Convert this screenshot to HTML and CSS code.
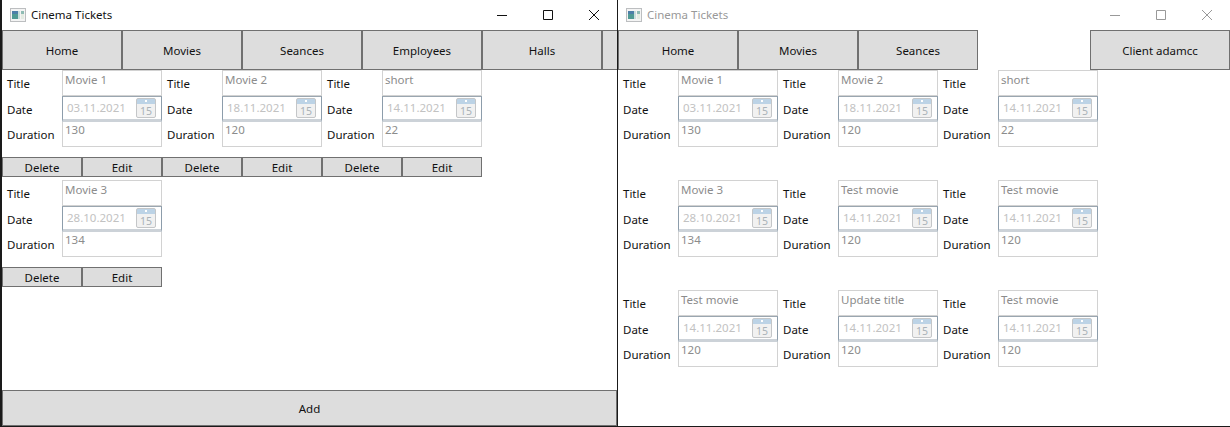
FILE: index.html
```html
<!DOCTYPE html>
<html lang="en">
<head>
    <meta charset="utf-8">
    <title>Cinema Tickets</title>
    <link rel="stylesheet" href="styles.css">
</head>
<body>
    <!-- admin window -->
    <div class="window admin">
        <div class="titlebar">
            <svg class="app-icon" viewBox="0 0 16 14">
                <rect x="0.5" y="0.5" width="15" height="13" fill="#f4f4f4" stroke="#bcbec0"/>
                <rect x="2" y="3" width="6" height="8" fill="#4f9a94"/>
                <rect x="2" y="3" width="6" height="3" fill="#4c7fa8"/>
                <rect x="8" y="3" width="2" height="8" fill="#c9dedb"/>
                <rect x="11" y="3" width="3" height="3" fill="#8fbcb4"/>
                <rect x="11" y="6" width="3" height="5" fill="#e4ebe2"/>
            </svg>
            <span class="title">Cinema Tickets</span>
            <div class="controls">
                <svg viewBox="0 0 10 10"><path d="M0 5.5H10"/></svg>
                <svg viewBox="0 0 10 10"><path d="M.5.5H9.5V9.5H.5Z"/></svg>
                <svg viewBox="0 0 10 10"><path d="M0 0L10 10M10 0L0 10"/></svg>
            </div>
        </div>
        <div class="nav">
            <button class="btn nav-btn">Home</button>
            <button class="btn nav-btn">Movies</button>
            <button class="btn nav-btn">Seances</button>
            <button class="btn nav-btn">Employees</button>
            <button class="btn nav-btn">Halls</button>
            <button class="btn nav-rest"></button>
        </div>
        <div class="movies">
            <div class="movie">
                <div class="labels"><span>Title</span><span>Date</span><span>Duration</span></div>
                <div class="fields">
                    <div class="field">Movie 1</div>
                    <div class="datefield"><span>03.11.2021</span><span class="cal">15</span></div>
                    <div class="field num">130</div>
                </div>
                <div class="actions"><button class="btn">Delete</button><button class="btn">Edit</button></div>
            </div>
            <div class="movie">
                <div class="labels"><span>Title</span><span>Date</span><span>Duration</span></div>
                <div class="fields">
                    <div class="field">Movie 2</div>
                    <div class="datefield"><span>18.11.2021</span><span class="cal">15</span></div>
                    <div class="field num">120</div>
                </div>
                <div class="actions"><button class="btn">Delete</button><button class="btn">Edit</button></div>
            </div>
            <div class="movie">
                <div class="labels"><span>Title</span><span>Date</span><span>Duration</span></div>
                <div class="fields">
                    <div class="field">short</div>
                    <div class="datefield"><span>14.11.2021</span><span class="cal">15</span></div>
                    <div class="field num">22</div>
                </div>
                <div class="actions"><button class="btn">Delete</button><button class="btn">Edit</button></div>
            </div>
            <div class="movie">
                <div class="labels"><span>Title</span><span>Date</span><span>Duration</span></div>
                <div class="fields">
                    <div class="field">Movie 3</div>
                    <div class="datefield"><span>28.10.2021</span><span class="cal">15</span></div>
                    <div class="field num">134</div>
                </div>
                <div class="actions"><button class="btn">Delete</button><button class="btn">Edit</button></div>
            </div>
        </div>
        <button class="btn add">Add</button>
    </div>

    <!-- client window -->
    <div class="window client">
        <div class="titlebar inactive">
            <svg class="app-icon" viewBox="0 0 16 14">
                <rect x="0.5" y="0.5" width="15" height="13" fill="#f4f4f4" stroke="#bcbec0"/>
                <rect x="2" y="3" width="6" height="8" fill="#4f9a94"/>
                <rect x="2" y="3" width="6" height="3" fill="#4c7fa8"/>
                <rect x="8" y="3" width="2" height="8" fill="#c9dedb"/>
                <rect x="11" y="3" width="3" height="3" fill="#8fbcb4"/>
                <rect x="11" y="6" width="3" height="5" fill="#e4ebe2"/>
            </svg>
            <span class="title">Cinema Tickets</span>
            <div class="controls">
                <svg viewBox="0 0 10 10"><path d="M0 5.5H10"/></svg>
                <svg viewBox="0 0 10 10"><path d="M.5.5H9.5V9.5H.5Z"/></svg>
                <svg viewBox="0 0 10 10"><path d="M0 0L10 10M10 0L0 10"/></svg>
            </div>
        </div>
        <div class="nav">
            <button class="btn nav-btn">Home</button>
            <button class="btn nav-btn">Movies</button>
            <button class="btn nav-btn">Seances</button>
            <button class="btn nav-user">Client adamcc</button>
        </div>
        <div class="movies">
            <div class="movie">
                <div class="labels"><span>Title</span><span>Date</span><span>Duration</span></div>
                <div class="fields">
                    <div class="field">Movie 1</div>
                    <div class="datefield"><span>03.11.2021</span><span class="cal">15</span></div>
                    <div class="field num">130</div>
                </div>
            </div>
            <div class="movie">
                <div class="labels"><span>Title</span><span>Date</span><span>Duration</span></div>
                <div class="fields">
                    <div class="field">Movie 2</div>
                    <div class="datefield"><span>18.11.2021</span><span class="cal">15</span></div>
                    <div class="field num">120</div>
                </div>
            </div>
            <div class="movie">
                <div class="labels"><span>Title</span><span>Date</span><span>Duration</span></div>
                <div class="fields">
                    <div class="field">short</div>
                    <div class="datefield"><span>14.11.2021</span><span class="cal">15</span></div>
                    <div class="field num">22</div>
                </div>
            </div>
            <div class="movie">
                <div class="labels"><span>Title</span><span>Date</span><span>Duration</span></div>
                <div class="fields">
                    <div class="field">Movie 3</div>
                    <div class="datefield"><span>28.10.2021</span><span class="cal">15</span></div>
                    <div class="field num">134</div>
                </div>
            </div>
            <div class="movie">
                <div class="labels"><span>Title</span><span>Date</span><span>Duration</span></div>
                <div class="fields">
                    <div class="field">Test movie</div>
                    <div class="datefield"><span>14.11.2021</span><span class="cal">15</span></div>
                    <div class="field num">120</div>
                </div>
            </div>
            <div class="movie">
                <div class="labels"><span>Title</span><span>Date</span><span>Duration</span></div>
                <div class="fields">
                    <div class="field">Test movie</div>
                    <div class="datefield"><span>14.11.2021</span><span class="cal">15</span></div>
                    <div class="field num">120</div>
                </div>
            </div>
            <div class="movie">
                <div class="labels"><span>Title</span><span>Date</span><span>Duration</span></div>
                <div class="fields">
                    <div class="field">Test movie</div>
                    <div class="datefield"><span>14.11.2021</span><span class="cal">15</span></div>
                    <div class="field num">120</div>
                </div>
            </div>
            <div class="movie">
                <div class="labels"><span>Title</span><span>Date</span><span>Duration</span></div>
                <div class="fields">
                    <div class="field">Update title</div>
                    <div class="datefield"><span>14.11.2021</span><span class="cal">15</span></div>
                    <div class="field num">120</div>
                </div>
            </div>
            <div class="movie">
                <div class="labels"><span>Title</span><span>Date</span><span>Duration</span></div>
                <div class="fields">
                    <div class="field">Test movie</div>
                    <div class="datefield"><span>14.11.2021</span><span class="cal">15</span></div>
                    <div class="field num">120</div>
                </div>
            </div>
        </div>
    </div>
</body>
</html>
```

FILE: styles.css
```css
html, body {
    margin: 0;
    height: 100%;
    overflow: hidden;
}

body {
    display: flex;
    background: white;
    font-family: "Noto Sans", "Open Sans", sans-serif;
    font-size: 11.5px;
    color: #111;
}

.window {
    box-sizing: border-box;
    display: flex;
    flex-direction: column;
    height: 427px;
    background: white;
}

.admin {
    width: 618px;
    border-left: 2px solid #1a1a1a;
    border-right: 1px solid #1a1a1a;
    border-bottom: 1px solid #1a1a1a;
}

.client {
    width: 612px;
    border-bottom: 1px solid #1a1a1a;
}

.titlebar {
    display: flex;
    align-items: center;
    height: 30px;
    flex: none;
    padding-left: 8px;
}

.app-icon {
    width: 16px;
    height: 14px;
    margin-right: 5px;
}

.title {
    margin-bottom: 1px;
}

.inactive .title {
    color: #999;
}

.controls {
    display: flex;
    gap: 36px;
    margin-left: auto;
    padding-right: 18px;
}

.controls svg {
    width: 10px;
    height: 10px;
    overflow: visible;
    fill: none;
    stroke: #111;
    stroke-width: 1;
}

.inactive .controls svg {
    stroke: #999;
}

.btn {
    box-sizing: border-box;
    display: block;
    margin: 0;
    padding: 0;
    border: 1px solid #707070;
    border-radius: 0;
    background: #dddddd;
    font: inherit;
    color: #111;
}

.nav {
    display: flex;
    flex: none;
    height: 40px;
}

.nav-btn {
    width: 120px;
}

.nav-rest {
    width: 15px;
    border-right: none;
}

.nav-user {
    width: 140px;
    margin-left: auto;
}

.movies {
    display: flex;
    flex-wrap: wrap;
    align-content: flex-start;
    flex: 1;
}

.movie {
    display: grid;
    grid-template-columns: 60px 100px;
    grid-template-rows: 77px 33px;
    width: 160px;
    height: 110px;
}

.labels {
    display: grid;
    grid-template-rows: 26px 25px 16px;
    padding: 6px 0 0 5px;
    line-height: 16px;
}

.fields {
    display: flex;
    flex-direction: column;
}

.field {
    box-sizing: border-box;
    height: 26px;
    padding: 1px 0 0 2px;
    border: 1px solid #d2d2d2;
    color: #8c8c8c;
    line-height: 16px;
}

.field.num {
    height: 25px;
    padding-top: 0;
    border-top: none;
}

.datefield {
    box-sizing: border-box;
    display: flex;
    align-items: center;
    justify-content: space-between;
    height: 26px;
    padding: 0 5px 1px 4px;
    border: 1px solid #8d9dab;
    border-bottom: 3px solid #ccd2d8;
    border-top-color: #9aa6b0;
    color: #c2c2c2;
}

/* calendar glyph of the date picker */
.cal {
    box-sizing: border-box;
    position: relative;
    width: 20px;
    height: 20px;
    flex: none;
    padding-top: 6px;
    border: 1px solid #c4c6c8;
    border-radius: 2px;
    background: linear-gradient(#bcd3e6 5px, #f1f1f1 5px);
    color: #a9b1b8;
    font-size: 10.5px;
    line-height: 12px;
    text-align: center;
}

.cal::before {
    content: "";
    position: absolute;
    top: 1px;
    left: 8px;
    width: 2px;
    height: 2px;
    background: white;
}

.actions {
    grid-column: 1 / 3;
    display: flex;
    align-items: flex-start;
    padding-top: 10px;
}

.actions .btn {
    width: 80px;
    height: 20px;
}

.add {
    flex: none;
    width: 100%;
    height: 36px;
}
```
